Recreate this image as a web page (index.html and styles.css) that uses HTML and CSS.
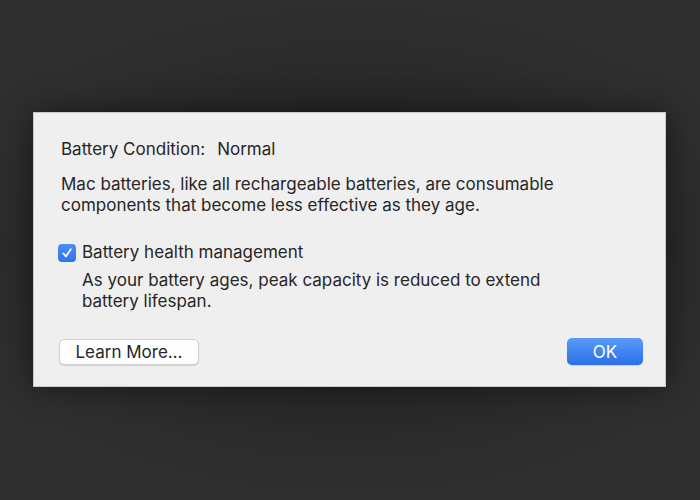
FILE: index.html
```html
<!DOCTYPE html>
<html>
<head>
<meta charset="utf-8">
<link rel="stylesheet" href="styles.css">
</head>
<body>
<div class="dialog">
  <p class="condition"><span>Battery Condition:</span><span class="value">Normal</span></p>
  <p class="desc">Mac batteries, like all rechargeable batteries, are consumable<br>components that become less effective as they age.</p>
  <div class="check-row">
    <span class="checkbox">
      <svg width="12" height="12" viewBox="0 0 12 12"><path d="M2.3 6.4 L4.9 9.4 L9.8 2.2" fill="none" stroke="#fff" stroke-width="1.8" stroke-linecap="round" stroke-linejoin="round"/></svg>
    </span>
    <span class="check-label">Battery health management</span>
  </div>
  <p class="sub">As your battery ages, peak capacity is reduced to extend<br>battery lifespan.</p>
  <div class="buttons">
    <button class="btn">Learn More…</button>
    <button class="btn primary">OK</button>
  </div>
</div>
</body>
</html>
```
FILE: styles.css
```css
html, body {
  margin: 0;
  height: 100%;
}
body {
  background: radial-gradient(ellipse 75% 60% at 50% 50%, #1d1d1d 0%, #262626 45%, #2e2e2e 75%, #303030 100%);
  padding: 112px 0 0 33px;
  box-sizing: border-box;
  font-family: Inter, "Noto Sans", sans-serif;
  color: #262626;
}
.dialog {
  width: 633px;
  height: 275px;
  box-sizing: border-box;
  background: #efefef;
  border: 1px solid #c9c9c9;
  box-shadow: 0 0 30px rgba(0,0,0,0.45);
  padding: 26px 22px 21px 27px;
  display: flex;
  flex-direction: column;
  font-size: 17px;
  line-height: 21px;
}
p { margin: 0; }
.condition .value { margin-left: 12px; }
.desc { margin-top: 14px; }
.check-row {
  margin-top: 26px;
  display: flex;
  align-items: center;
  gap: 6px;
  margin-left: -3px;
}
.checkbox {
  width: 18px;
  height: 18px;
  border-radius: 4px;
  background: linear-gradient(#4d8ef7, #2f74ea);
  display: flex;
  align-items: center;
  justify-content: center;
}
.sub { margin-top: 7px; margin-left: 21px; }
.buttons {
  margin-top: auto;
  display: flex;
  justify-content: space-between;
  align-items: center;
}
.btn {
  font-family: inherit;
  font-size: 17px;
  color: #262626;
  height: 26px;
  width: 140px;
  padding: 0;
  border-radius: 5px;
  border: 1px solid #cfcfcf;
  background: #fefefe;
  box-shadow: 0 1px 1px rgba(0,0,0,0.12);
  margin-left: -2px;
}
.btn.primary {
  width: 76px;
  height: 27px;
  margin-left: 0;
  color: #fff;
  border: none;
  background: linear-gradient(#5a9bf8, #2a6fe8);
}
```
